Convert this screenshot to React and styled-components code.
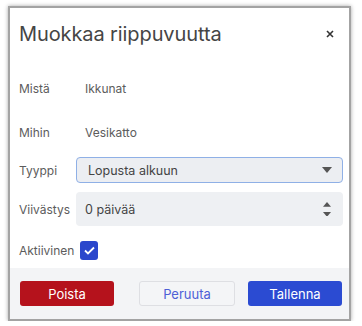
import React from 'react';
import styled, { createGlobalStyle } from 'styled-components';

const GlobalStyle = createGlobalStyle`
  body {
    margin: 0;
    padding: 6px 0 0 8px;
    background: #ffffff;
    font-family: Inter, "Noto Sans", sans-serif;
  }
`;

const Frame = styled.div`
  width: 339px;
  border: 2px solid #a3a3a3;
  box-shadow: 0 0 4px rgba(0, 0, 0, 0.35);
  background: #ffffff;
  display: flex;
  flex-direction: column;
`;

const Header = styled.div`
  height: 54px;
  padding: 14px 12px 0 9px;
  box-sizing: border-box;
  display: flex;
  align-items: flex-start;
  justify-content: space-between;
`;

const Title = styled.h2`
  margin: 0;
  font-size: 20px;
  line-height: 24px;
  font-weight: 400;
  color: #454545;
  letter-spacing: -0.1px;
`;

const Close = styled.button`
  border: none;
  background: transparent;
  padding: 0;
  width: 14px;
  height: 24px;
  display: flex;
  align-items: center;
  justify-content: center;
  color: #444;
  cursor: pointer;
`;

const Body = styled.div`
  padding: 13px 6px 8px 9px;
  display: flex;
  flex-direction: column;
`;

const Row = styled.div`
  display: flex;
  align-items: center;
  height: ${(p) => p.$h}px;
  margin-top: ${(p) => p.$mt || 0}px;
`;

const Label = styled.span`
  width: ${(p) => (p.$inline ? 'auto' : '57px')};
  flex-shrink: 0;
  font-size: 12px;
  color: #5c5c5c;
`;

const Value = styled.span`
  padding-left: 9px;
  font-size: 12px;
  color: #5c5c5c;
`;

const Field = styled.div`
  flex: 1;
  height: 100%;
  box-sizing: border-box;
  display: flex;
  align-items: center;
  justify-content: space-between;
  border-radius: 4px;
  background: ${(p) => (p.$focused ? '#eceef2' : '#eef0f3')};
  border: 1px solid ${(p) => (p.$focused ? '#8fb0e6' : 'transparent')};
  padding: 0 10px 0 ${(p) => (p.$focused ? 11 : 8)}px;
  font-size: 12.5px;
  color: #444;
`;

const Stepper = styled.div`
  display: flex;
  flex-direction: column;
  gap: 5px;
  padding-right: 1px;
`;

const Check = styled.span`
  margin-left: 6px;
  width: 18px;
  height: 19px;
  border-radius: 3px;
  background: #2b47cc;
  display: flex;
  align-items: center;
  justify-content: center;
`;

const Footer = styled.div`
  background: #f3f4f6;
  padding: 13px 7px 13px 10px;
  display: flex;
  align-items: center;
`;

const Button = styled.button`
  height: 25px;
  width: ${(p) => p.$w}px;
  margin-left: ${(p) => p.$ml || 0}px;
  border-radius: 3px;
  font-family: inherit;
  font-size: 13px;
  padding: 0;
  cursor: pointer;
  border: 1px solid ${(p) => (p.$kind === 'ghost' ? '#dedfe3' : 'transparent')};
  background: ${(p) =>
    p.$kind === 'danger' ? '#b5121c' : p.$kind === 'primary' ? '#2b4bd2' : '#f4f5f7'};
  color: ${(p) => (p.$kind === 'ghost' ? '#4d5fd6' : '#ffffff')};
`;

const Spacer = styled.div`
  flex: 1;
`;

function Triangle({ up, size = 10 }) {
  return (
    <svg width={size} height={size * 0.6} viewBox="0 0 10 6">
      <path d={up ? 'M0 6 L5 0 L10 6 Z' : 'M0 0 L10 0 L5 6 Z'} fill="#555" />
    </svg>
  );
}

export default function App() {
  return (
    <>
      <GlobalStyle />
      <Frame>
        <Header>
          <Title>Muokkaa riippuvuutta</Title>
          <Close aria-label="Sulje">
            <svg width="8" height="8" viewBox="0 0 8 8">
              <path d="M1 1 L7 7 M7 1 L1 7" stroke="#333" strokeWidth="1.6" />
            </svg>
          </Close>
        </Header>
        <Body>
          <Row $h={26}>
            <Label>Mistä</Label>
            <Value>Ikkunat</Value>
          </Row>
          <Row $h={26} $mt={18}>
            <Label>Mihin</Label>
            <Value>Vesikatto</Value>
          </Row>
          <Row $h={26} $mt={12}>
            <Label>Tyyppi</Label>
            <Field $focused>
              Lopusta alkuun
              <Triangle />
            </Field>
          </Row>
          <Row $h={34} $mt={9}>
            <Label>Viivästys</Label>
            <Field>
              0 päivää
              <Stepper>
                <Triangle up size={8} />
                <Triangle size={8} />
              </Stepper>
            </Field>
          </Row>
          <Row $h={20} $mt={14}>
            <Label $inline>Aktiivinen</Label>
            <Check>
              <svg width="11" height="9" viewBox="0 0 11 9">
                <path d="M1 4.5 L4 7.5 L10 1.5" stroke="#fff" strokeWidth="1.8" fill="none" />
              </svg>
            </Check>
          </Row>
        </Body>
        <Footer>
          <Button $kind="danger" $w={94}>Poista</Button>
          <Spacer />
          <Button $kind="ghost" $w={96}>Peruuta</Button>
          <Button $kind="primary" $w={94} $ml={13}>Tallenna</Button>
        </Footer>
      </Frame>
    </>
  );
}
